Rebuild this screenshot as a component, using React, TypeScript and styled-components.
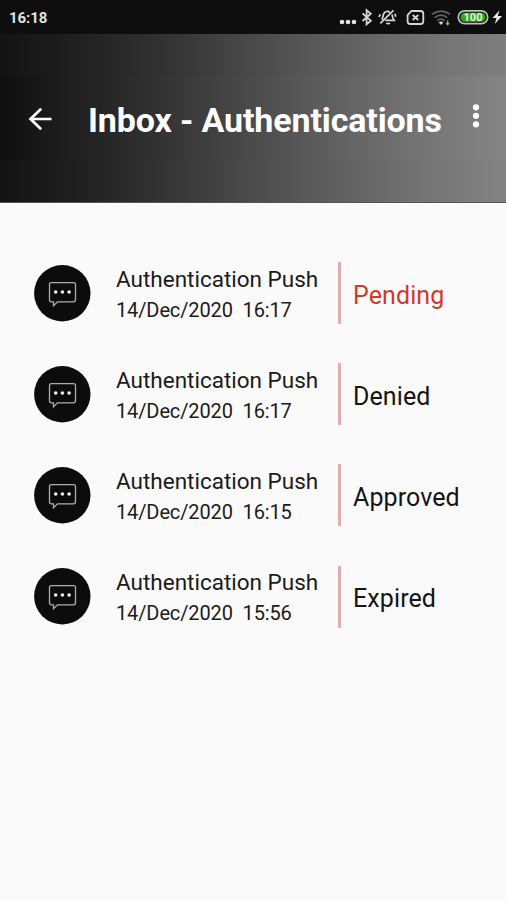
import React from "react";
import styled, { createGlobalStyle } from "styled-components";

const GlobalStyle = createGlobalStyle`
  * { box-sizing: border-box; }
  body { margin: 0; background: #fafafa; font-family: Roboto, sans-serif; }
`;

const Screen = styled.main`
  width: 506px;
  height: 900px;
  overflow: hidden;
  background: #fafafa;
`;

const StatusBar = styled.div`
  display: flex;
  align-items: center;
  justify-content: space-between;
  height: 34px;
  padding: 0 0 0 9px;
  background: #0e0e0e;
`;

const Clock = styled.span`
  color: #e2e2e2;
  font-size: 15px;
  font-weight: 700;
  line-height: 34px;
  letter-spacing: -0.1px;
  padding-top: 2px;
`;

const StatusIcons = styled.svg`
  display: block;
  width: 170px;
  height: 34px;
`;

const BatteryLabel = styled.text`
  font-family: Roboto, sans-serif;
  font-size: 11px;
  font-weight: 700;
`;

const Header = styled.header`
  display: flex;
  align-items: center;
  height: 169px;
  padding: 2px 20px 0 26px;
  border-bottom: 1px solid #555;
  background:
    linear-gradient(90deg, #131313 0%, #1d1d1d 12%, #2f2f2f 30%, #4a4a4a 50%, #626262 70%, #757575 88%, #7e7e7e 100%) 0 0 / 100% 42px no-repeat,
    linear-gradient(90deg, #131313 0%, #1f1f1f 15%, #313131 30%, #4c4c4c 50%, #646464 70%, #787878 88%, #838383 100%) 0 126px / 100% 43px no-repeat,
    linear-gradient(90deg, #0f0f0f 0%, #1d1d1d 12%, #303030 30%, #4b4b4b 50%, #656565 70%, #797979 88%, #858585 100%);
`;

const IconButton = styled.button`
  display: flex;
  padding: 0;
  border: 0;
  background: none;
`;

const Title = styled.h1`
  flex: 1;
  margin: 2px 0 0 34px;
  color: #fff;
  font-size: 34px;
  font-weight: 700;
  line-height: 44px;
  white-space: nowrap;
  letter-spacing: -0.13px;
`;

const MenuButton = styled(IconButton)`
  margin-top: -6px;
`;

const List = styled.ul`
  display: flex;
  flex-direction: column;
  gap: 39.2px;
  margin: 0;
  padding: 59px 0 0 34px;
  list-style: none;
`;

const Item = styled.li`
  display: grid;
  grid-template-columns: 82px 222px 1fr;
  grid-template-rows: 62px;
`;

const Avatar = styled.svg`
  display: block;
  width: 57px;
  height: 57px;
  margin-top: 2.8px;
`;

const Details = styled.div`
  display: flex;
  flex-direction: column;
  padding-top: 0.8px;
  color: #1b1b1b;
  white-space: pre;
`;

const Name = styled.span`
  font-size: 22.5px;
  line-height: 33px;
`;

const Timestamp = styled.span`
  font-size: 20px;
  line-height: 29px;
  letter-spacing: -0.12px;
`;

const Status = styled.span<{ $pending?: boolean }>`
  display: flex;
  align-items: center;
  padding: 4.4px 0 0 12px;
  border-left: 3px solid #e8abab;
  color: ${({ $pending }) => ($pending ? "#d03a28" : "#151515")};
  font-size: 25px;
  letter-spacing: 0.1px;
`;

const items = [
  { time: "16:17", status: "Pending" },
  { time: "16:17", status: "Denied" },
  { time: "16:15", status: "Approved" },
  { time: "15:56", status: "Expired" },
];

function SystemIcons() {
  return (
    <StatusIcons viewBox="336 0 170 34" fill="none" stroke="#d6d6d6" strokeWidth="1.8">
      <g fill="#e2e2e2" stroke="none">
        <circle cx="342" cy="22" r="2.3" />
        <circle cx="348" cy="22" r="2.3" />
        <circle cx="354" cy="22" r="2.3" />
      </g>
      <path d="M362.5 13.3 370.8 20.7l-4.2 3.6V10.2l4.2 3.6-8.3 7.2" />
      <g strokeWidth="1.7">
        <path d="M381.8 19.5c1.3-1.6 1-4.3 2-6 1.3-2.2 4.3-2.8 6-1M392 14.5c.8 2.2.3 4 2 5.8h-8.7M386.5 22.8c.8 1.3 2.6 1.3 3.3 0M380.3 23.4 393.5 10.3" />
        <path d="M379.2 17l.9-2.8M395 13.8l.7 3" />
      </g>
      <path d="M411.5 11h9q2.8 0 2.8 2.8v7.4q0 2.8-2.8 2.8h-10.1q-2.8 0-2.8-2.8v-6z" />
      <path d="m412.7 15 5.6 5m0-5-5.6 5" />
      <g stroke="#626262" strokeWidth="1.8">
        <path d="M432 14.3q9-6.5 18 0M434.7 17.6q6.3-4.8 12.6 0M437.3 20.6q3.7-2.8 7.4 0" />
      </g>
      <path d="m438.6 22.3 2.4 2.7 2.4-2.7q-2.4-1.6-4.8 0z" fill="#d6d6d6" stroke="none" />
      <path d="M447.7 20.5v4.5m-1.6-2.2 1.6 2 1.4-1.8" stroke="#aaa" strokeWidth="1.2" />
      <rect x="458.3" y="10.8" width="29.4" height="12.9" rx="6.4" stroke="#b9c5b5" strokeWidth="1.7" />
      <rect x="460.5" y="12.8" width="25" height="8.9" rx="4.4" fill="#37a719" stroke="none" />
      <BatteryLabel x="473" y="21.1" textAnchor="middle" fill="#e4f7dc" stroke="none">100</BatteryLabel>
      <path d="m499.5 10.2-7 7.8h4l-1.7 6 7.2-8.1h-4.2z" fill="#e8e8e8" stroke="none" />
    </StatusIcons>
  );
}

function MessageAvatar() {
  return (
    <Avatar viewBox="0 0 57 57" fill="none">
      <circle cx="28.3" cy="28.3" r="28.2" fill="#0c0c0c" />
      <path
        d="M17.5 17.6h22q2 0 2 2v15.2q0 2-2 2H23.5l-4 4v-4h-2q-2 0-2-2V19.6q0-2 2-2z"
        stroke="#adadad"
        strokeWidth="1.3"
      />
      <g fill="#f2f2f2">
        <circle cx="21.7" cy="27" r="1.8" />
        <circle cx="28.4" cy="27" r="1.8" />
        <circle cx="35.1" cy="27" r="1.8" />
      </g>
    </Avatar>
  );
}

export default function App() {
  return (
    <>
      <GlobalStyle />
      <Screen>
        <StatusBar>
          <Clock>16:18</Clock>
          <SystemIcons />
        </StatusBar>
        <Header>
          <IconButton aria-label="Back">
            <svg width="28" height="28" viewBox="0 0 28 28" fill="none" stroke="#fff" strokeWidth="2.7">
              <path d="M25.5 14H4.5M15.2 3.7 4.5 14l10.7 10.3" />
            </svg>
          </IconButton>
          <Title>Inbox - Authentications</Title>
          <MenuButton aria-label="More options">
            <svg width="20" height="28" viewBox="0 0 20 28" fill="#fff">
              <circle cx="10" cy="5.3" r="3.1" />
              <circle cx="10" cy="13.8" r="3.1" />
              <circle cx="10" cy="22.3" r="3.1" />
            </svg>
          </MenuButton>
        </Header>
        <List>
          {items.map(({ time, status }) => (
            <Item key={status}>
              <MessageAvatar />
              <Details>
                <Name>Authentication Push</Name>
                <Timestamp>{`14/Dec/2020  ${time}`}</Timestamp>
              </Details>
              <Status $pending={status === "Pending"}>{status}</Status>
            </Item>
          ))}
        </List>
      </Screen>
    </>
  );
}
